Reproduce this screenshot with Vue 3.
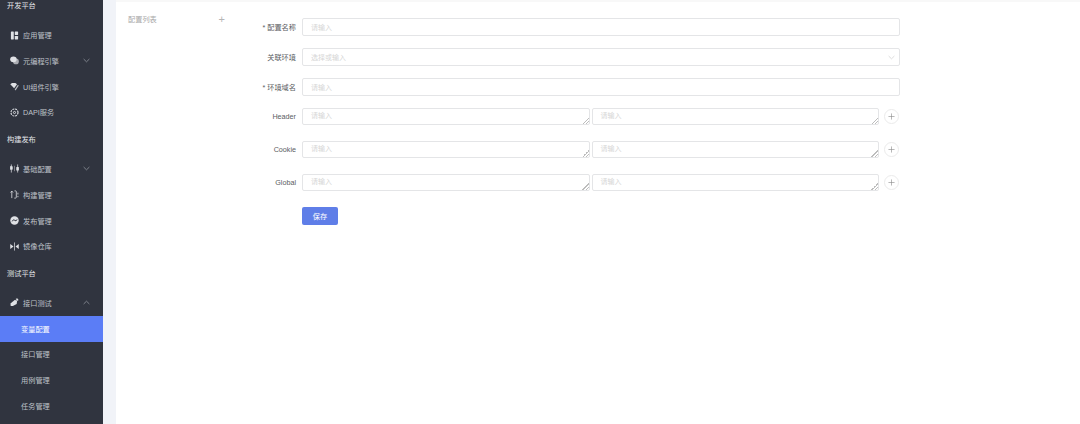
<script setup>
const menu = [
  { title: '开发平台', items: [
    { label: '应用管理', icon: 'app' },
    { label: '元编程引擎', icon: 'chat', arrow: 'down' },
    { label: 'UI组件引擎', icon: 'gem' },
    { label: 'DAPI服务', icon: 'hex' },
  ] },
  { title: '构建发布', items: [
    { label: '基础配置', icon: 'sliders', arrow: 'down' },
    { label: '构建管理', icon: 'build' },
    { label: '发布管理', icon: 'publish' },
    { label: '镜像仓库', icon: 'mirror' },
  ] },
  { title: '测试平台', items: [
    { label: '接口测试', icon: 'pen', arrow: 'up' },
    { label: '变量配置', sub: true, active: true },
    { label: '接口管理', sub: true },
    { label: '用例管理', sub: true },
    { label: '任务管理', sub: true },
  ] },
]
const kvRows = ['Header', 'Cookie', 'Global']
</script>

<template>
  <div class="page">
    <aside class="sidebar">
      <template v-for="group in menu" :key="group.title">
        <div class="group">{{ group.title }}</div>
        <div
          v-for="item in group.items"
          :key="item.label"
          class="item"
          :class="{ sub: item.sub, active: item.active }"
        >
          <svg v-if="item.icon" class="icon" viewBox="0 0 10 10">
            <g v-if="item.icon === 'app'" fill="currentColor">
              <rect x="1" y="0.5" width="3.2" height="9" rx="0.5" />
              <rect x="5.3" y="0.5" width="3.7" height="4" rx="0.5" />
              <rect x="5.3" y="5.5" width="3.7" height="4" rx="0.5" />
            </g>
            <g v-else-if="item.icon === 'chat'" fill="currentColor">
              <circle cx="6.6" cy="6" r="3.2" opacity="0.7" />
              <ellipse cx="3.8" cy="3.7" rx="3.6" ry="3.2" />
            </g>
            <g v-else-if="item.icon === 'gem'" fill="currentColor">
              <path d="M0.3 2.4 L2.2 1 H6 L7.8 2.4 L4.6 7 Z" />
              <path d="M8.6 3.4 L9.8 3.8 L6.2 9.4 L5.2 8.2 Z" opacity="0.8" />
            </g>
            <g v-else-if="item.icon === 'hex'" fill="none" stroke="currentColor">
              <circle cx="5" cy="5" r="3.9" stroke-width="1.2" stroke-dasharray="2.2 0.9" />
              <circle cx="5" cy="5" r="1.2" stroke-width="1" />
            </g>
            <g v-else-if="item.icon === 'sliders'" stroke="currentColor" fill="currentColor" stroke-width="0.8">
              <path d="M1.5 0.5 V9.5 M8.5 0.5 V9.5" />
              <rect x="0.5" y="3" width="2" height="2.8" />
              <rect x="7.5" y="4" width="2" height="2.8" />
              <path d="M5 2 V8" opacity="0.6" />
            </g>
            <g v-else-if="item.icon === 'build'" stroke="currentColor" fill="none" stroke-width="0.9">
              <path d="M2 9 V1.2 M0.6 2.8 L2 1.2 L3.4 2.8" />
              <path d="M5 1 H6.4 Q7 1 7 1.8 V8 Q7 9 6.2 9 H4.8" />
              <path d="M8.8 3 V5 M8.8 6.5 V8" />
            </g>
            <g v-else-if="item.icon === 'publish'">
              <circle cx="5" cy="5" r="4.7" fill="currentColor" />
              <path d="M2.4 6 Q3.8 3 5.3 4.8 T7.8 3.8" fill="none" stroke="#30343f" stroke-width="1.1" />
            </g>
            <g v-else-if="item.icon === 'mirror'" fill="currentColor">
              <path d="M0.3 2.2 L3.9 5 L0.3 7.8 Z" />
              <path d="M9.7 2.2 L6.1 5 L9.7 7.8 Z" />
              <rect x="4.6" y="0.5" width="0.8" height="9" />
            </g>
            <g v-else-if="item.icon === 'pen'" fill="currentColor">
              <path d="M0.5 6 L5.2 2.2 L8 2.8 L7.4 6.6 L3.2 8.8 H0.8 Z" />
              <path d="M6.2 1.2 L8 0.4 L9.4 2 L8.8 3.4 Z" />
            </g>
          </svg>
          <span class="text">{{ item.label }}</span>
          <svg v-if="item.arrow" class="arrow" :class="{ up: item.arrow === 'up' }" viewBox="0 0 8 5">
            <path d="M0.7 0.8 L4 4 L7.3 0.8" fill="none" stroke="currentColor" stroke-width="0.8" />
          </svg>
        </div>
      </template>
    </aside>

    <main class="main">
      <section class="list">
        <span>配置列表</span>
        <span class="list-add">+</span>
      </section>

      <form class="form" @submit.prevent>
        <div class="row">
          <label class="label"><i>*</i> 配置名称</label>
          <input class="control" placeholder="请输入" />
        </div>
        <div class="row">
          <label class="label">关联环境</label>
          <div class="select">
            <input class="control" placeholder="选择或输入" />
            <svg class="select-arrow" viewBox="0 0 8 5">
              <path d="M0.7 0.8 L4 4 L7.3 0.8" fill="none" stroke="currentColor" stroke-width="0.8" />
            </svg>
          </div>
        </div>
        <div class="row">
          <label class="label"><i>*</i> 环境域名</label>
          <input class="control" placeholder="请输入" />
        </div>
        <div v-for="name in kvRows" :key="name" class="row kv">
          <label class="label">{{ name }}</label>
          <textarea class="area" placeholder="请输入"></textarea>
          <textarea class="area" placeholder="请输入"></textarea>
          <button type="button" class="add">
            <svg viewBox="0 0 8 8"><path d="M4 0.5 V7.5 M0.5 4 H7.5" stroke="currentColor" stroke-width="0.7" /></svg>
          </button>
        </div>
        <div class="row">
          <span class="label"></span>
          <button type="submit" class="save">保存</button>
        </div>
      </form>
    </main>
  </div>
</template>

<style>
html, body { margin: 0; background: #fff; overflow: hidden; }
</style>

<style scoped>
.page {
  display: flex;
  height: 424px;
  overflow: hidden;
  background: #f1f3f8;
  font-family: "Liberation Sans", "Noto Sans CJK SC", sans-serif;
  font-size: 7.2px;
}
.sidebar {
  width: 103px;
  flex: none;
  height: 433px;
  margin-top: -8.5px;
  background: #30343f;
  color: #bfc2c9;
}
.group {
  height: 30.7px;
  box-sizing: border-box;
  padding: 0 0 3px 7px;
  display: flex;
  align-items: center;
  color: #e4e6ea;
}
.item {
  position: relative;
  height: 25.8px;
  box-sizing: border-box;
  display: flex;
  align-items: center;
  padding-left: 10px;
}
.item.sub { padding-left: 21px; }
.item.active { background: #5b7df6; color: #fff; }
.icon { width: 9px; height: 9px; flex: none; margin-right: 4px; color: #dfe1e5; }
.arrow { position: absolute; right: 13px; top: 10px; width: 7px; height: 5px; color: #9fa3ac; }
.arrow.up { transform: rotate(180deg); }
.main {
  flex: 1;
  display: flex;
  margin-left: 13px;
  border-top: 2px solid #f8f8f8;
  background: #fff;
}
.list {
  width: 112px;
  flex: none;
  box-sizing: border-box;
  padding: 12px 3px 0 12px;
  display: flex;
  justify-content: space-between;
  align-items: flex-start;
  color: #a9a9a9;
  line-height: 11px;
}
.list-add { font-size: 11px; line-height: 11px; color: #b5b5b5; }
.form {
  width: 660px;
  margin-left: 12px;
  padding-top: 16px;
  display: flex;
  flex-direction: column;
  gap: 12px;
}
.row { display: flex; align-items: center; }
.kv { gap: 2px; margin-bottom: 4px; }
.label {
  width: 56px;
  flex: none;
  margin-right: 6px;
  text-align: right;
  color: #5a5d62;
}
.kv .label { margin-right: 4px; }
.label i { font-style: normal; color: #5a5d62; }
.control, .area {
  box-sizing: border-box;
  font: inherit;
  font-size: 7px;
  outline: none;
  border: 1px solid #e4e5e7;
  border-radius: 2px;
  background: #fff;
  padding: 0 8px;
}
.control::placeholder, .area::placeholder { color: #d6d6d6; }
.control { width: 598px; height: 18px; }
.select { position: relative; display: flex; }
.select-arrow { position: absolute; right: 5px; top: 7px; width: 7px; height: 5px; color: #cfcfcf; }
.area {
  width: 287.5px;
  height: 17px;
  padding: 1px 8px;
  line-height: 12px;
  display: block;
  overflow: hidden;
  resize: both;
}
.area::-webkit-resizer {
  background: linear-gradient(135deg, transparent 50%, #bdbdbd 50%, #bdbdbd 60%, transparent 60%, transparent 74%, #bdbdbd 74%, #bdbdbd 84%, transparent 84%) no-repeat right bottom / 7px 7px;
}
.add {
  width: 15px;
  height: 15px;
  margin-left: 3px;
  padding: 0;
  border: 1px solid #ebebeb;
  border-radius: 50%;
  background: #fff;
  color: #8a8a8a;
  display: flex;
  align-items: center;
  justify-content: center;
}
.add svg { width: 7px; height: 7px; }
.save {
  width: 36px;
  height: 18px;
  padding: 0;
  border: none;
  border-radius: 2px;
  background: #5f7ee8;
  color: #fff;
  font: inherit;
}
</style>
